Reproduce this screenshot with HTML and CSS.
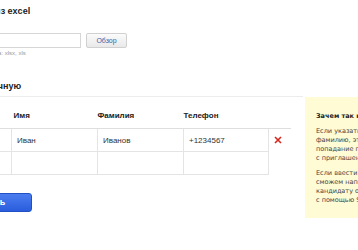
FILE: index.html
```html
<!DOCTYPE html>
<html lang="ru">
<head>
    <meta charset="UTF-8">
    <meta name="viewport" content="width=device-width, initial-scale=1.0">
    <title>Пригласить кандидатов</title>
    <link rel="stylesheet" href="styles.css">
</head>
<body>
    <div class="page">
        <!-- Upload from file -->
        <div class="upload">
            <h2 class="upload-title">Загрузить из excel</h2>
            <div class="file-row">
                <input type="text" class="file-input">
                <button class="browse-btn">Обзор</button>
            </div>
            <div class="hint">Формат файла: xlsx, xls</div>
        </div>

        <div class="manual-wrap">
            <div class="manual">
                <h2 class="manual-title">Или заполните вручную</h2>

                <table class="people">
                    <colgroup>
                        <col class="col-num">
                        <col class="col-name">
                        <col class="col-name">
                        <col class="col-phone">
                        <col class="col-del">
                    </colgroup>
                    <thead>
                        <tr>
                            <th>№</th>
                            <th>Имя</th>
                            <th>Фамилия</th>
                            <th>Телефон</th>
                            <th></th>
                        </tr>
                    </thead>
                    <tbody>
                        <tr>
                            <td>1</td>
                            <td>Иван</td>
                            <td>Иванов</td>
                            <td>+1234567</td>
                            <td class="del">
                                <svg width="8" height="8" viewBox="0 0 8 8"><path d="M1 1L7 7M7 1L1 7" stroke="#d9261c" stroke-width="1.6"/></svg>
                            </td>
                        </tr>
                        <tr>
                            <td>2</td>
                            <td></td>
                            <td></td>
                            <td></td>
                            <td class="del"></td>
                        </tr>
                    </tbody>
                </table>

                <div class="actions">
                    <button class="send-btn">Пригласить</button>
                </div>
            </div>

            <div class="aside">
                <h3>Зачем так нужны эти данные?</h3>
                <p>Если указать имя и<br>фамилию, это повысит<br>попадание письма<br>с приглашением в ящик.</p>
                <p>Если ввести телефон, мы<br>сможем напомнить<br>кандидату о встрече<br>с помощью SMS.</p>
            </div>
        </div>
    </div>
</body>
</html>
```

FILE: styles.css
```css
* {
    margin: 0;
    padding: 0;
    box-sizing: border-box;
}

body {
    font-family: "Liberation Sans", Arial, sans-serif;
    background-color: #fff;
    color: #333;
    overflow: hidden;
}

/* page is scrolled to the right a bit */
.page {
    margin-left: -60px;
    width: 600px;
}

.upload {
    padding: 5px 0 0 8px;
}

.upload-title {
    font-size: 9px;
    line-height: 12px;
    font-weight: bold;
    color: #222;
}

.file-row {
    display: flex;
    margin-top: 16px;
}

.file-input {
    width: 133px;
    height: 15px;
    border: 1px solid #d6d6d6;
    background-color: #fff;
}

.browse-btn {
    width: 41px;
    height: 15px;
    margin-left: 5px;
    border: 1px solid #d0d0d0;
    border-radius: 2px;
    background: linear-gradient(#fbfbfb, #e9e9e9);
    color: #3b5ea6;
    font-family: "Liberation Sans", Arial, sans-serif;
    font-size: 7px;
}

.hint {
    margin-top: 1px;
    padding-left: 12px;
    font-size: 6px;
    line-height: 8px;
    color: #999;
}

.manual-wrap {
    display: flex;
    align-items: flex-start;
}

.manual {
    width: 363px;
    padding-left: 8px;
    margin-top: 23px;
}

.manual-title {
    font-size: 9px;
    line-height: 12px;
    font-weight: bold;
    color: #222;
    white-space: nowrap;
    padding-bottom: 4px;
    border-bottom: 1px solid #ececec;
    margin-left: -8px;
    padding-left: 8px;
    text-indent: -35px;
}

.people {
    border-collapse: collapse;
    table-layout: fixed;
    width: 342px;
    font-size: 8px;
}

.col-num { width: 63px; }
.col-name { width: 86px; }
.col-phone { width: 85px; }
.col-del { width: 22px; }

.people th {
    text-align: left;
    font-weight: bold;
    color: #222;
    line-height: 10px;
    padding: 14px 0 7px 2px;
    border-bottom: 1px solid #dedede;
}

.people th:nth-child(3),
.people th:nth-child(4) {
    padding-left: 0;
}

.people td {
    height: 23px;
    padding: 0 5px;
    border: 1px solid #e4e4e4;
    border-top: none;
    vertical-align: middle;
    white-space: nowrap;
    overflow: hidden;
}

.people td.del {
    border: none;
    padding-left: 5px;
}

.people td.del svg {
    display: block;
}

.actions {
    margin-top: 16px;
}

.send-btn {
    height: 19px;
    padding: 0 26px;
    margin-left: -22px;
    border: 1px solid #2150c4;
    border-radius: 3px;
    background: linear-gradient(#4b7df0, #2a5ddc);
    color: #fff;
    font-family: "Liberation Sans", Arial, sans-serif;
    font-size: 9px;
    font-weight: bold;
}

.aside {
    width: 170px;
    margin-top: 40px;
    margin-left: 2px;
    padding: 15px 11px 13px;
    background-color: #fffbd4;
    font-family: "DejaVu Sans", Verdana, sans-serif;
    font-size: 6.5px;
    line-height: 9px;
    color: #444;
}

.aside h3 {
    font-size: 6.5px;
    font-weight: bold;
    color: #222;
    margin-bottom: 6px;
}

.aside p {
    margin-bottom: 6px;
}

.aside p:last-child {
    margin-bottom: 0;
}
```
